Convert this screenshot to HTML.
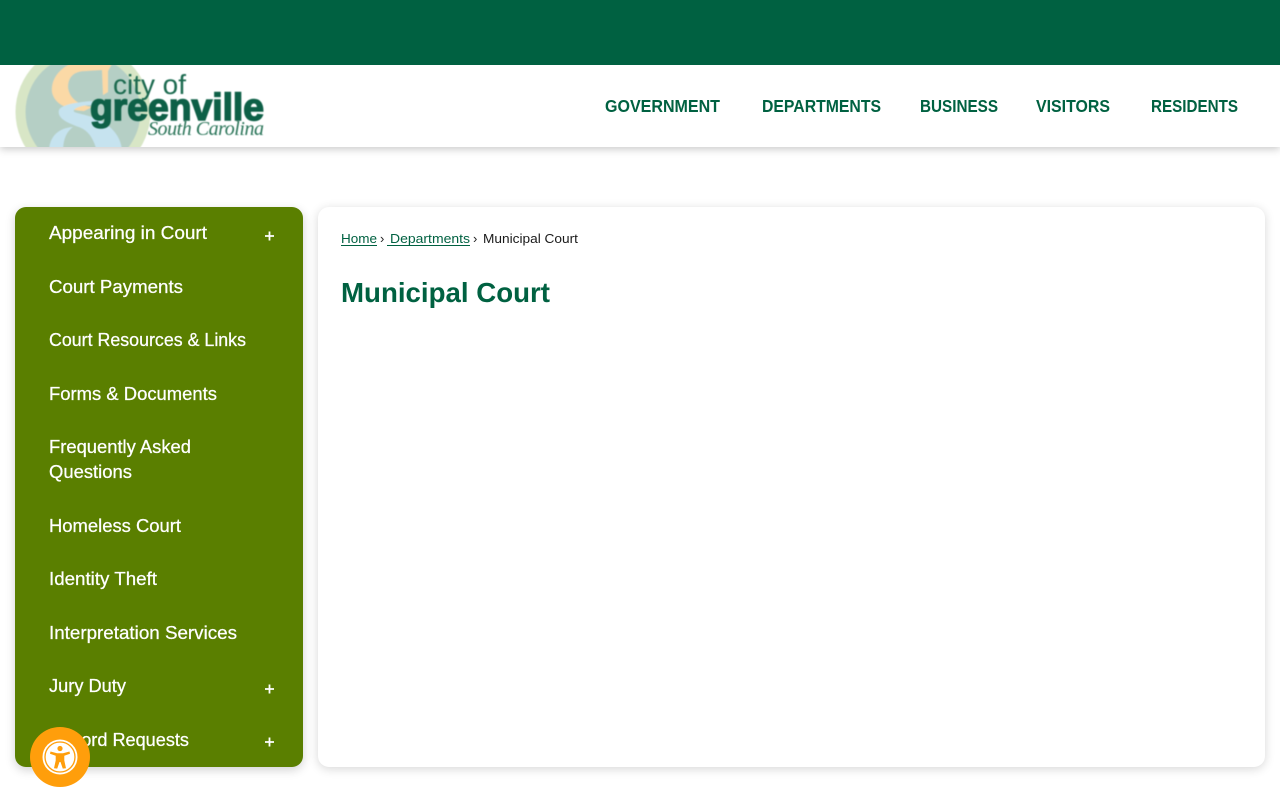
<!DOCTYPE html>
<html lang="en">
<head>
<meta charset="utf-8">
<title>Municipal Court</title>
<style>
html,body{margin:0;padding:0;background:#fff;width:1280px;height:800px;overflow:hidden}
svg{display:block;position:absolute;left:0;top:0}
.hdr{position:absolute;left:0;top:65px;width:1280px;height:82px;background:#fff;box-shadow:0 2px 8px rgba(0,0,0,.22)}
.top{position:absolute;left:0;top:0;width:1280px;height:65px;background:#006141}
.side{position:absolute;left:15px;top:207px;width:288px;height:560px;background:#5a7f00;border-radius:11px;box-shadow:0 3px 10px rgba(0,0,0,.18)}
.card{position:absolute;left:318px;top:207px;width:947px;height:560px;background:#fff;border-radius:11px;box-shadow:0 2px 10px rgba(0,0,0,.16)}
text{font-family:"Liberation Sans",sans-serif}
.nav{font-size:17.500px;font-weight:700;fill:#006141}
.m{font-size:18.500px;fill:#fff;stroke:#fff;stroke-width:.25px}
.b{font-size:13px}
</style>
</head>
<body>
<div class="hdr"></div>
<div class="top"></div>
<div class="side"></div>
<div class="card"></div>
<svg width="1280" height="800" viewBox="0 0 1280 800" xmlns="http://www.w3.org/2000/svg">
<defs>
  <clipPath id="lc"><rect x="0" y="65" width="300" height="82"/></clipPath>
  <filter id="soft" x="-5%" y="-5%" width="110%" height="110%"><feGaussianBlur stdDeviation="0.4"/></filter>
</defs>
<g clip-path="url(#lc)">
  <g filter="url(#soft)">
  <circle cx="83" cy="112" r="67.500" fill="#d8e6c6"/>
  <circle cx="83" cy="112" r="57.500" fill="#b5cfc5"/>
  <path d="M112 64 L70 64 C58 70 51 80 52 92 C54 103 66 110 84 111 L92 107 C78 105 69 98 68 87 C68 77 74 71 86 71 L102 70 L103 95 L108 92 L108 71 Z" fill="#fbd9a6"/>
  <path d="M92 101 C80 102 62 104 59 110 C57 118 66 122 76 126 C86 129 93 135 97 152 L122 152 C122 138 112 124 92 117 C80 113 72 113 74 110 C76 107 84 105 92 105 Z" fill="#c6e3ef"/>
  <path d="M49 152 C49 138 57 128 73 127 C66 132 63 140 63 152 Z" fill="#c6e3ef"/>
  </g>
</g>
<g fill="#0f6047" filter="url(#soft)">
  <text x="113" y="94" font-size="28" textLength="73" lengthAdjust="spacingAndGlyphs" fill="#1a6a50">city of</text>
  <text x="90" y="120" font-size="38" font-weight="700" stroke="#0f6047" stroke-width="1.500" textLength="174" lengthAdjust="spacingAndGlyphs">greenville</text>
  <text x="148" y="135" style="font-family:'Liberation Serif',serif" font-style="italic" font-size="20" textLength="116" lengthAdjust="spacing" fill="#2a7559">South Carolina</text>
</g>

<text class="nav" x="605" y="112" textLength="115" lengthAdjust="spacingAndGlyphs">GOVERNMENT</text>
<text class="nav" x="762" y="112" textLength="119" lengthAdjust="spacingAndGlyphs">DEPARTMENTS</text>
<text class="nav" x="920" y="112" textLength="78" lengthAdjust="spacingAndGlyphs">BUSINESS</text>
<text class="nav" x="1036" y="112" textLength="74" lengthAdjust="spacingAndGlyphs">VISITORS</text>
<text class="nav" x="1151" y="112" textLength="87" lengthAdjust="spacingAndGlyphs">RESIDENTS</text>

<text class="m" x="49" y="239" textLength="158" lengthAdjust="spacingAndGlyphs">Appearing in Court</text>
<text class="m" x="49" y="293" textLength="134" lengthAdjust="spacingAndGlyphs">Court Payments</text>
<text class="m" x="49" y="346" textLength="197" lengthAdjust="spacingAndGlyphs">Court Resources &amp; Links</text>
<text class="m" x="49" y="400" textLength="168" lengthAdjust="spacingAndGlyphs">Forms &amp; Documents</text>
<text class="m" x="49" y="453" textLength="142" lengthAdjust="spacingAndGlyphs">Frequently Asked</text>
<text class="m" x="49" y="478" textLength="83" lengthAdjust="spacingAndGlyphs">Questions</text>
<text class="m" x="49" y="532" textLength="132" lengthAdjust="spacingAndGlyphs">Homeless Court</text>
<text class="m" x="49" y="585" textLength="108" lengthAdjust="spacingAndGlyphs">Identity Theft</text>
<text class="m" x="49" y="639" textLength="188" lengthAdjust="spacingAndGlyphs">Interpretation Services</text>
<text class="m" x="49" y="692" textLength="77" lengthAdjust="spacingAndGlyphs">Jury Duty</text>
<text class="m" x="49" y="746" textLength="140" lengthAdjust="spacingAndGlyphs">Record Requests</text>

<g stroke="#fff" stroke-width="1.800" fill="none">
  <path d="M265 236H274M269.500 231.500V240.500"/>
  <path d="M265 689H274M269.500 684.500V693.500"/>
  <path d="M265 742H274M269.500 737.500V746.500"/>
</g>

<text class="b" x="341" y="243" fill="#006141" textLength="36" lengthAdjust="spacingAndGlyphs">Home</text>
<path d="M341 245.500H377" stroke="#006141" stroke-width="1"/>
<text class="b" x="380" y="243" fill="#222">›</text>
<text class="b" x="390" y="243" fill="#006141" textLength="80" lengthAdjust="spacingAndGlyphs">Departments</text>
<path d="M387 245.500H470" stroke="#006141" stroke-width="1"/>
<text class="b" x="473" y="243" fill="#222">›</text>
<text class="b" x="483" y="243" fill="#1a1a1a" textLength="95" lengthAdjust="spacingAndGlyphs">Municipal Court</text>

<text x="341" y="302" font-size="28" font-weight="700" fill="#006141" textLength="209" lengthAdjust="spacingAndGlyphs">Municipal Court</text>

<circle cx="60" cy="757" r="30" fill="#ff9e0b"/>
<circle cx="60" cy="757" r="17.500" fill="#fff"/>
<circle cx="60" cy="757" r="15" fill="none" stroke="#ff9e0b" stroke-width="1.300"/>
<circle cx="60" cy="748.500" r="2.600" fill="#ff9e0b"/>
<path d="M50.500 751.500 L57 753.200 H63 L69.500 751.500 L70 753.700 L64.300 755.800 L64.300 760.500 L66 768.300 L62.800 768.600 L60.500 762 H59.500 L57.200 768.600 L54 768.300 L55.700 760.500 L55.700 755.800 L50 753.700 Z" fill="#ff9e0b"/>
</svg>
</body>
</html>
